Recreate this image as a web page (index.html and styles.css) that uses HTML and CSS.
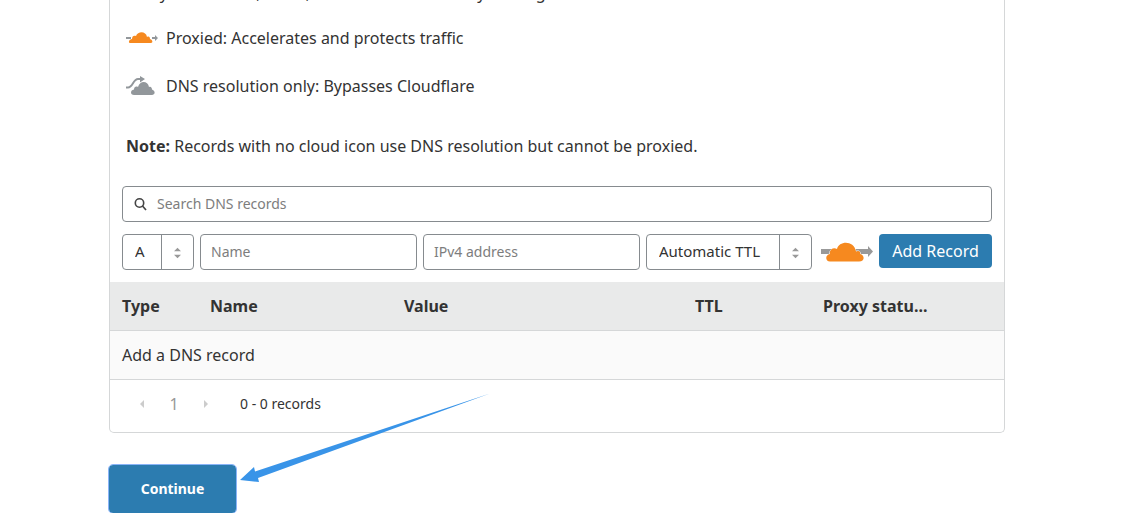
FILE: index.html
```html
<!DOCTYPE html>
<html lang="en">
<head>
<meta charset="utf-8">
<title>DNS records</title>
<link rel="stylesheet" href="styles.css">
</head>
<body>
<main class="page">
  <section class="card">
    <div class="intro">
      <p class="lead">Proxy traffic for A, AAAA, and CNAME records by clicking</p>
      <p class="legend"><svg class="legend-icon" viewBox="0 0 32 20" aria-hidden="true"><path fill="#92979b" d="M0 9h5v2H0zM26 9h3V7l3 3-3 3v-2h-3z"/><path fill="#f6891f" d="M4 15C2 15 3 11 6 11C6 8 8 7 10 8C12 3 20 3 21 9C23 8 24 9 24 11C27 12 27 15 25 15z"/></svg>Proxied: Accelerates and protects traffic</p>
      <p class="legend"><svg class="legend-icon" viewBox="0 0 32 20" aria-hidden="true"><path fill="none" stroke="#92979b" stroke-width="2" d="M0 11.500H2C7 11.500 7 3 12 3H16"/><path fill="#92979b" d="M14 0l5 3-5 3.500zM8 19C4 19 4 14 8 13.500C8 11 10 10 12 11C14 4 22 5 23 11C25 10 26 12 26 13.500C30 15 29 19 26 19z"/></svg>DNS resolution only: Bypasses Cloudflare</p>
      <p class="note"><strong>Note:</strong> Records with no cloud icon use DNS resolution but cannot be proxied.</p>
    </div>
    <form class="controls">
      <label class="search">
        <svg class="search-icon" viewBox="0 0 14 14" aria-hidden="true"><circle cx="5.500" cy="6" r="4.200"/><path d="M8.500 9l3.500 4"/></svg>
        <input type="search" placeholder="Search DNS records" aria-label="Search DNS records">
      </label>
      <div class="record-form">
        <div class="select type-select"><select aria-label="Record type"><option>A</option></select><svg viewBox="0 0 8 12"><path d="M0 4l4-4 4 4zM0 8l4 4 4-4z"/></svg></div>
        <input class="field" type="text" placeholder="Name" aria-label="Name">
        <input class="field" type="text" placeholder="IPv4 address" aria-label="IPv4 address">
        <div class="select ttl-select"><select aria-label="TTL"><option>Automatic TTL</option></select><svg viewBox="0 0 8 12"><path d="M0 4l4-4 4 4zM0 8l4 4 4-4z"/></svg></div>
        <button class="proxy-toggle" type="button" aria-label="Proxied"><svg viewBox="0 0 52 20"><path fill="#999" d="M0 7h47V4l5 5.500-5 5.500v-3H0z"/><path fill="#f6891f" stroke="#fff" stroke-width="1" paint-order="stroke" d="M9 19.500C4 19.500 4 12.500 9 12C8 8 12 5 16 7C18-1.500 33-2 35 9.500C38 8 40 10 39 12C44 13 44 19.500 38 19.500z"/></svg></button>
        <button class="add" type="button">Add Record</button>
      </div>
    </form>
    <table class="records">
      <thead><tr><th class="col-type">Type</th><th class="col-name">Name</th><th class="col-value">Value</th><th class="col-ttl">TTL</th><th>Proxy statu...</th></tr></thead>
      <tbody><tr><td colspan="5">Add a DNS record</td></tr></tbody>
    </table>
    <nav class="pager" aria-label="Pagination">
      <button type="button" aria-label="Previous page"><svg viewBox="0 0 4 8"><path d="M4 0v8L0 4z"/></svg></button>
      <span class="current">1</span>
      <button type="button" aria-label="Next page"><svg viewBox="0 0 4 8"><path d="M0 0v8l4-4z"/></svg></button>
      <span class="count">0 - 0 records</span>
    </nav>
  </section>
  <div class="actions">
    <button class="continue" type="button">Continue</button>
    <svg class="pointer" viewBox="0 0 250 90" aria-hidden="true"><path fill="#3994e8" d="M0 87L14 74L15 78.500L250 .5L18 85L19 89z"/></svg>
  </div>
</main>
</body>
</html>
```
FILE: styles.css
```css
* { box-sizing: border-box; }
body {
  margin: 0;
  padding-right: 30px;
  background: #fff;
  color: #333;
  font: 16px/24px "Noto Sans", "Open Sans", sans-serif;
  overflow: hidden;
}
p { margin: 0; }
button, input, select { font: inherit; color: inherit; }
button { cursor: pointer; }
.page { max-width: 896px; margin: 0 auto; }
.card { border: 1px solid #d5d7d8; border-top: 0; border-radius: 0 0 5px 5px; }
.intro { padding: 0 16px; }
.lead { margin-top: -19px; margin-bottom: 21px; }
.legend { display: flex; align-items: center; margin-bottom: 24px; }
.legend-icon { width: 32px; height: 20px; margin-right: 8px; flex: none; }
.note { margin-top: 36px; }
.controls { display: grid; grid-template-columns: minmax(0, 1fr); gap: 12px; padding: 28px 12px 12px; }
.search, .field, .select { height: 36px; border: 1px solid #868b8f; border-radius: 4px; background: #fff; }
.search { display: flex; align-items: center; padding: 0 11px; gap: 9px; }
.search-icon { width: 14px; height: 14px; fill: none; stroke: #444; stroke-width: 1.6; }
.search input { flex: 1; min-width: 0; padding: 0; border: 0; outline: 0; background: none; font-size: 14px; }
::placeholder { color: #7d7d7d; opacity: 1; }
.record-form { display: flex; gap: 6px; }
.field { flex: 1; min-width: 0; padding: 0 10px 2px; font-size: 14px; }
.select { position: relative; flex: none; font-size: 15px; }
.select select { width: 100%; height: 100%; padding: 0 12px 2px; border: 0; background: none; appearance: none; outline: 0; }
.select svg { position: absolute; top: 0; right: 0; width: 32px; height: 34px; padding: 12px 12px 10px; border-left: 1px solid #868b8f; fill: #999; pointer-events: none; }
.type-select { width: 72px; }
.ttl-select { width: 166px; }
.proxy-toggle { flex: none; width: 55px; height: 36px; padding: 0 0 0 3px; border: 0; background: none; }
.proxy-toggle svg { display: block; width: 52px; height: 20px; }
.add { flex: none; width: 113px; height: 34px; padding: 0; border: 0; border-radius: 4px; background: #2c7cb0; color: #fff; }
.records { width: 100%; border-collapse: separate; border-spacing: 0; table-layout: fixed; text-align: left; }
.records th, .records td { height: 49px; padding: 0 12px; border-bottom: 1px solid #d5d7d8; }
.records th { background: #e9eaea; }
.records td { background: #fafafa; }
.records .col-type { width: 88px; }
.records .col-name { width: 194px; }
.records .col-value { width: 291px; }
.records .col-ttl { width: 128px; }
.pager { display: flex; align-items: center; height: 52px; padding: 0 24px 4px; font-size: 14px; }
.pager button { width: 16px; height: 16px; padding: 4px 6px; border: 0; background: none; }
.pager svg { display: block; width: 4px; height: 8px; fill: #ccc; }
.current { width: 48px; text-align: center; color: #999; font-size: 16px; }
.count { margin-left: 26px; }
.actions { position: relative; display: flex; margin-top: 32px; }
.continue { width: 127px; height: 48px; padding: 0; border: 0; border-radius: 4px; outline: 1px solid #8ab4f8; background: #2c7cb0; color: #fff; font-size: 14px; font-weight: 700; }
.pointer { position: absolute; left: 131px; bottom: 30px; width: 250px; height: 90px; }
```
